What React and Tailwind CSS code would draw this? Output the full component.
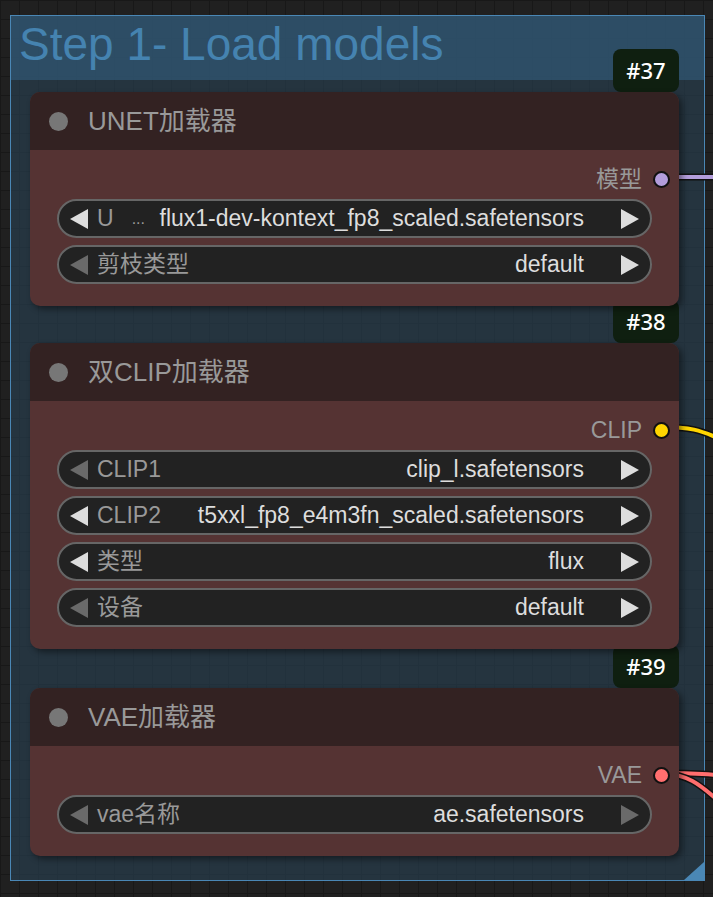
import React from 'react';

const FONT = { fontFamily: '"Liberation Sans", Arial, "Noto Sans CJK SC", sans-serif' };

const nodes = [
    {
        id: '#37',
        title: 'UNET加载器',
        output: '模型',
        dot: 'bg-[#b39ddb]',
        widgets: [
            { label: 'U', dots: true, value: 'flux1-dev-kontext_fp8_scaled.safetensors', left: true, right: true },
            { label: '剪枝类型', value: 'default', left: false, right: true },
        ],
        gap: 'mt-[12px]',
    },
    {
        id: '#38',
        title: '双CLIP加载器',
        output: 'CLIP',
        dot: 'bg-[#ffd500]',
        widgets: [
            { label: 'CLIP1', value: 'clip_l.safetensors', left: false, right: true },
            { label: 'CLIP2', value: 't5xxl_fp8_e4m3fn_scaled.safetensors', left: true, right: true },
            { label: '类型', value: 'flux', left: true, right: true },
            { label: '设备', value: 'default', left: false, right: true },
        ],
        gap: 'mt-[37px]',
    },
    {
        id: '#39',
        title: 'VAE加载器',
        output: 'VAE',
        dot: 'bg-[#ff6e6e]',
        widgets: [
            { label: 'vae名称', value: 'ae.safetensors', left: false, right: false },
        ],
        gap: 'mt-[39px]',
    },
];

function Arrow({ dir, on }) {
    const pts = dir === 'left' ? '18,0 18,20 0,10' : '0,0 0,20 18,10';
    return (
        <svg width="18" height="20" viewBox="0 0 18 20" className="shrink-0">
            <polygon points={pts} fill={on ? '#dddddd' : '#6a6a6a'} />
        </svg>
    );
}

function Widget({ w }) {
    return (
        <div className="flex items-center h-[39px] rounded-full border-2 border-[#666] bg-[#222] px-[11px] text-[23px] leading-none">
            <Arrow dir="left" on={w.left} />
            <span className="ml-[9px] text-[#999] whitespace-nowrap">{w.label}</span>
            {w.dots && <span className="ml-[18px] text-[16px] text-[#999]">...</span>}
            <span className="ml-auto mr-[37px] text-[#ddd] whitespace-nowrap">{w.value}</span>
            <Arrow dir="right" on={w.right} />
        </div>
    );
}

function Node({ node }) {
    return (
        <div className={`relative w-[649px] ${node.gap}`}>
            <div
                className="absolute bottom-full right-0 z-0 flex h-[43px] w-[66px] items-center justify-center rounded-[8px] bg-[#0f1f10] text-[22px] font-medium text-white"
                style={{ fontFamily: '"Noto Sans", "Liberation Sans", sans-serif' }}
            >
                {node.id}
            </div>
            <div className="relative z-10 overflow-hidden rounded-[10px] bg-[#553333] pb-[22px] shadow-[3px_3px_6px_rgba(0,0,0,0.45)]">
                <div className="flex h-[58px] items-center bg-[#332222] pl-[19px]">
                    <div className="h-[19px] w-[19px] rounded-full bg-[#777]" />
                    <span className="ml-[20px] text-[26px] leading-none text-[#999]">{node.title}</span>
                </div>
                <div className="mt-[9px] flex h-[40px] items-center justify-end pr-[9px]">
                    <span className="text-[23px] leading-none text-[#999]">{node.output}</span>
                    <div className={`ml-[11px] h-[17px] w-[17px] rounded-full border-2 border-[#111] ${node.dot}`} />
                </div>
                <div className="flex flex-col gap-[7px] px-[27px]">
                    {node.widgets.map((w, i) => (
                        <Widget key={i} w={w} />
                    ))}
                </div>
            </div>
        </div>
    );
}

export default function App() {
    return (
        <div
            className="relative h-[897px] w-[713px] overflow-hidden bg-[#202020] bg-[linear-gradient(#181818_1px,transparent_1px),linear-gradient(90deg,#181818_1px,transparent_1px)] bg-size-[19px_19px] pt-[15px] pl-[10px]"
            style={FONT}
        >
            {/* links */}
            <svg className="pointer-events-none absolute inset-0 z-[5]" width="713" height="897">
                <g fill="none" strokeLinecap="round">
                    <path d="M662 177 L720 177" stroke="#111" strokeWidth="7" />
                    <path d="M662 177 L720 177" stroke="#b39ddb" strokeWidth="4" />
                    <path d="M662 427 C690 427 700 430 720 439" stroke="#111" strokeWidth="7" />
                    <path d="M662 427 C690 427 700 430 720 439" stroke="#ffd500" strokeWidth="4" />
                    <path d="M662 773 C690 773 700 774 720 775" stroke="#111" strokeWidth="7" />
                    <path d="M662 773 C690 773 700 774 720 775" stroke="#ff6e6e" strokeWidth="4" />
                    <path d="M662 773 C690 775 700 785 720 802" stroke="#111" strokeWidth="7" />
                    <path d="M662 773 C690 775 700 785 720 802" stroke="#ff6e6e" strokeWidth="4" />
                </g>
            </svg>

            <div className="relative w-[695px] border border-[#4a87b5] bg-[rgba(42,67,85,0.6)] pb-[24px]">
                <div className="h-[64px] bg-[rgba(52,95,127,0.6)] pl-[8px] pt-[5px] text-[46px] leading-none text-[#4583b0]">
                    Step 1- Load models
                </div>
                <div className="pl-[19px]">
                    {nodes.map((n) => (
                        <Node key={n.id} node={n} />
                    ))}
                </div>
                <svg className="absolute bottom-0 right-0" width="20" height="18" viewBox="0 0 20 18">
                    <polygon points="20,0 20,18 0,18" fill="#4a87b5" />
                </svg>
            </div>
        </div>
    );
}
